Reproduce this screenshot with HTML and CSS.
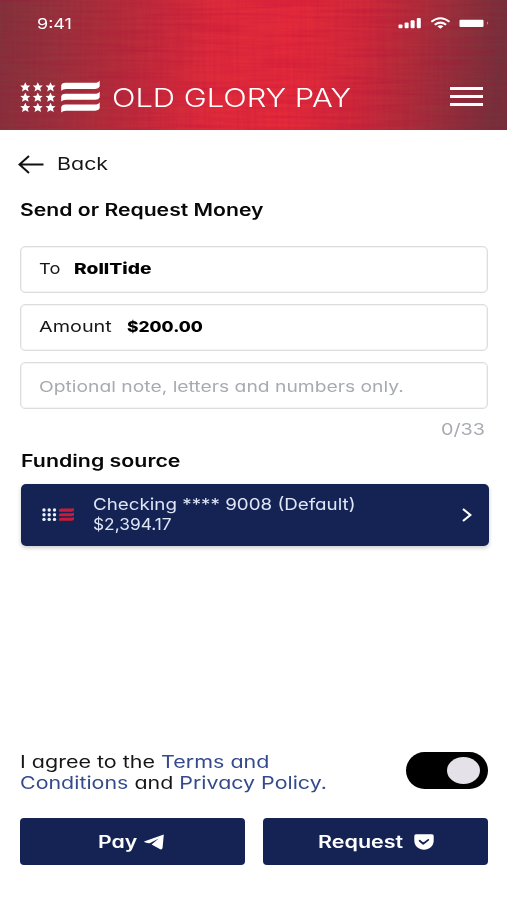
FILE: index.html
```html
<!DOCTYPE html>
<html lang="en">
<head>
<meta charset="utf-8">
<title>Old Glory Pay</title>
<link rel="stylesheet" href="styles.css">
</head>
<body>
<header class="header">
  <svg class="weave" width="507" height="130" aria-hidden="true">
    <filter id="rows" x="0" y="0" width="100%" height="100%">
      <feTurbulence type="fractalNoise" baseFrequency="0.012 0.3" numOctaves="3" seed="4"/>
      <feColorMatrix values="0 0 0 0 .4  0 0 0 0 0  0 0 0 0 .05  2 0 0 0 -.75"/>
    </filter>
    <filter id="cols" x="0" y="0" width="100%" height="100%">
      <feTurbulence type="fractalNoise" baseFrequency="0.3 0.012" numOctaves="3" seed="9"/>
      <feColorMatrix values="0 0 0 0 .4  0 0 0 0 0  0 0 0 0 .05  2 0 0 0 -.75"/>
    </filter>
    <rect width="507" height="130" filter="url(#rows)" opacity=".22"/>
    <rect width="507" height="130" filter="url(#cols)" opacity=".1"/>
  </svg>
  <div class="status">
    <span class="t time">9:41</span>
    <svg width="92" height="14" viewBox="0 0 92 14" fill="#fff">
      <rect x="0.5" y="7.5" width="4" height="3.800" rx="1"/>
      <rect x="6.600" y="5.500" width="4" height="5.800" rx="1"/>
      <rect x="12.600" y="3.300" width="4" height="8" rx="1"/>
      <rect x="18.800" y="1" width="4" height="10.300" rx="1"/>
      <g fill="none" stroke="#fff" stroke-width="2">
        <path d="M33.300 4.800Q42.400-2.300 51.500 4.800"/>
        <path d="M36.700 7.800Q42.400 3.400 48.100 7.800"/>
      </g>
      <path d="M39.400 9.300Q42.400 7.200 45.400 9.300L42.400 11.700Z"/>
      <rect x="61.500" y="2.700" width="24" height="7.400" rx="1"/>
      <path d="M89 4.600Q91 6.200 89 7.800Z" opacity=".5"/>
    </svg>
  </div>
  <div class="brand">
    <svg width="80" height="34" viewBox="0 0 80 34" fill="#fff">
      <defs>
        <path id="star" d="M0-4.900 1.500-1.700 5-1.500 2.400.9 3.300 4.300 0 2.500-3.300 4.300-2.400.9-5-1.500-1.500-1.700Z"/>
        <path id="stripe" d="M0 10.200V4.500Q1 2.300 4 2.300H33Q37.500 2.300 38.500 0V6Q37.500 8.400 34 8.400H5Q1.500 8.400 0 10.200Z"/>
      </defs>
      <use href="#star" x="5.300" y="7.100"/><use href="#star" x="17.800" y="7.100"/><use href="#star" x="30.500" y="7.100"/>
      <use href="#star" x="5.300" y="17.400"/><use href="#star" x="17.800" y="17.400"/><use href="#star" x="30.500" y="17.400"/>
      <use href="#star" x="5.300" y="27.700"/><use href="#star" x="17.800" y="27.700"/><use href="#star" x="30.500" y="27.700"/>
      <use href="#stripe" x="41.200" y=".5"/><use href="#stripe" x="41.200" y="11.400"/><use href="#stripe" x="41.200" y="22.300"/>
    </svg>
    <h1 class="t title">OLD GLORY PAY</h1>
    <div class="menu"><i></i><i></i><i></i></div>
  </div>
</header>
<main class="page">
  <a class="back">
    <svg width="26" height="20" viewBox="0 0 26 20" fill="none" stroke="#111" stroke-width="2"><path d="M25.500 10.500H2M11 2 1.500 10.500 11 19"/></svg>
    <span class="t back-label">Back</span>
  </a>
  <h2 class="heading"><span class="t send">Send or Request Money</span></h2>
  <div class="fields">
    <div class="field"><span class="t label-to">To</span><b class="t value-to">RollTide</b></div>
    <div class="field"><span class="t label-amount">Amount</span><b class="t value-amount">$200.00</b></div>
    <div class="field note"><span class="t hint">Optional note, letters and numbers only.</span></div>
  </div>
  <div class="counter"><span class="t count">0/33</span></div>
  <h2 class="heading source-heading"><span class="t funding">Funding source</span></h2>
  <div class="source">
    <svg width="33" height="14" viewBox="0 0 33 14">
      <g fill="#eef1fa">
        <circle cx="2" cy="2" r="1.700"/><circle cx="7.200" cy="2" r="1.700"/><circle cx="12.500" cy="2" r="1.700"/>
        <circle cx="2" cy="6.700" r="1.700"/><circle cx="7.200" cy="6.700" r="1.700"/><circle cx="12.500" cy="6.700" r="1.700"/>
        <circle cx="2" cy="11.400" r="1.700"/><circle cx="7.200" cy="11.400" r="1.700"/><circle cx="12.500" cy="11.400" r="1.700"/>
      </g>
      <path fill="#c81c38" d="M17 1.300Q18 .6 20 .6H29Q31 .6 32 0V2.800Q31 3.700 29 3.700H17ZM17 6Q18 5.200 20 5.200H29Q31 5.200 32 4.600V7.300Q31 8.300 29 8.300H17ZM17 10.500Q18 9.700 20 9.700H29Q31 9.700 32 9.100V11.800Q31 12.800 29 12.800H17Z"/>
    </svg>
    <div class="account">
      <span class="t account-name">Checking **** 9008 (Default)</span>
      <span class="t balance">$2,394.17</span>
    </div>
    <svg width="10" height="14" viewBox="0 0 10 14" fill="none" stroke="#fff" stroke-width="2.200"><path d="M1 1 8.300 7 1 13"/></svg>
  </div>
  <div class="consent">
    <p class="terms">
      <span class="t terms-1">I agree to the <a>Terms and</a></span>
      <span class="t terms-2"><a>Conditions</a> and <a>Privacy Policy.</a></span>
    </p>
    <div class="switch"><i></i></div>
  </div>
  <div class="actions">
    <button class="btn btn-pay"><span class="t pay">Pay</span>
      <svg width="20" height="16" viewBox="0 0 20 16" fill="#fff"><path d="M19.800.5 0 7.400Q-.2 8.800 5.600 9.300L14.800 4.600 7.600 10.600 16.200 15.300Q18.200 15.800 18.600 13.800Z"/></svg></button>
    <button class="btn btn-request"><span class="t request">Request</span>
      <svg width="20" height="16" viewBox="0 0 20 16"><path fill="#fff" d="M2 .3H18Q19.700.3 19.700 2V6.500C19.700 12.500 15 15.700 10 15.700S.3 12.500.3 6.500V2Q.3.3 2 .3Z"/><path d="M5.700 6.700 9.200 9.700 14.300 5.900" fill="none" stroke="#142354" stroke-width="1.800" stroke-linecap="round" stroke-linejoin="round"/></svg></button>
  </div>
</main>
</body>
</html>
```
FILE: styles.css
```css
* { box-sizing: border-box; margin: 0; padding: 0; }
body {
  width: 507px; height: 900px; overflow: hidden; background: #fff; color: #161616;
  font-family: Inter, "Open Sans", sans-serif; font-feature-settings: "cv11";
}

/* Extended lettering: every label is widened from its left edge */
.t { display: block; flex: none; width: max-content; white-space: nowrap; transform-origin: 0 50%; transform: scaleX(var(--wide, 1.25)); }

.header {
  position: relative; height: 130px; color: #fff; overflow: hidden;
  background: linear-gradient(97deg, #80343b 0, #97333b 12%, #c02c3a 29%, #de2b3a 42%, #e42b3a 57%, #d02a39 70%, #a52f3a 83%, #74333a 97%);
}
.weave { position: absolute; inset: 0; }
.status { position: relative; display: flex; justify-content: space-between; height: 46px; padding: 17px 17px 0 37px; }
.time { --wide: 1.2; font-size: 15px; line-height: 13px; }
.brand { position: relative; display: flex; height: 70px; padding: 34px 24px 0 20px; }
.title { --wide: 1.235; width: 338px; margin-left: 12px; font-size: 25px; line-height: 36px; font-weight: 350; }
.menu { display: grid; gap: 5px; align-content: start; width: 33px; padding-top: 7px; }
.menu i { height: 3px; background: #fff; }

.page { padding: 0 19px 0 20px; }
.back { display: flex; height: 69px; padding-top: 24px; margin-left: -2px; }
.back-label { --wide: 1.26; margin-left: 12.500px; font-size: 17px; line-height: 21px; }
.heading { height: 47px; font-size: 17px; line-height: 22px; font-weight: 600; color: #080808; }
.send { --wide: 1.245; }

.fields { display: grid; gap: 11px; }
.field { display: flex; height: 47px; padding-left: 18px; border: 1px solid #dcdede; border-radius: 5px; font-size: 15px; line-height: 44px; box-shadow: inset 0 0 0 1px #f3f4f4; }
.field b { color: #000; font-weight: 800; }
.note { line-height: 48px; }
.label-to { --wide: 1.22; width: 35px; }
.value-to { --wide: 1.28; }
.label-amount { --wide: 1.32; width: 88px; }
.value-amount { --wide: 1.16; }
.hint { --wide: 1.285; color: #a7abb1; }
.counter { display: flex; justify-content: flex-end; height: 41px; padding-top: 10px; }
.count { --wide: 1.235; width: 47px; font-size: 16px; line-height: 20px; color: #a7abb1; }

.source-heading { height: 34px; padding-left: .5px; }
.funding { --wide: 1.255; }
.source {
  display: flex; align-items: center; height: 62px; margin: 0 -1px 0 1px; padding: 0 17px 0 21px;
  background: #142354; color: #dfe6f6; border-radius: 5px; box-shadow: 0 2px 4px rgba(0, 0, 0, .2);
}
.account { flex: 1; margin: -2px 0 0 17.500px; font-size: 16.500px; line-height: 20px; }
.account-name { --wide: 1.138; }
.balance { --wide: 1.05; }

.consent { display: flex; justify-content: space-between; height: 272px; padding-top: 205px; }
.terms { padding-top: 1px; font-size: 17px; line-height: 21px; }
.terms a { color: #344a8c; }
.terms-1 { --wide: 1.264; }
.terms-2 { --wide: 1.259; }
.switch { display: flex; justify-content: flex-end; align-items: center; width: 82px; height: 37px; margin-top: 1px; padding-right: 8px; border-radius: 19px; background: #000; }
.switch i { width: 33px; height: 27px; border-radius: 50%; background: #e4e2e8; }

.actions { display: flex; gap: 18px; }
.btn {
  display: flex; justify-content: space-between; align-items: center; width: 225px; height: 47px; border: 0; border-radius: 4px;
  background: #142354; color: #fff; font: 600 17px/46px Inter, sans-serif; font-feature-settings: "cv11";
}
.btn-pay { padding: 0 81px 0 77.500px; }
.btn-request { padding: 0 54px 0 54.500px; }
.pay { --wide: 1.25; }
.request { --wide: 1.265; }
```
